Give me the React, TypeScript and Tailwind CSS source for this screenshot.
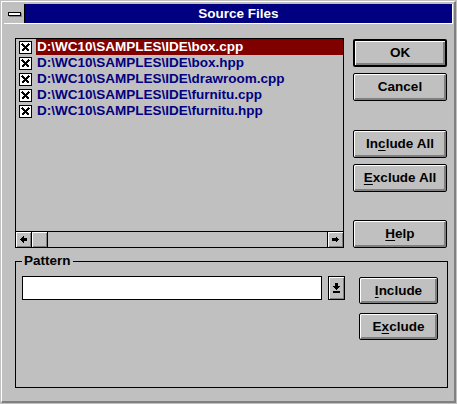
import React from 'react';

// Lista de ficheros del diálogo
const files = [
  'D:\\WC10\\SAMPLES\\IDE\\box.cpp',
  'D:\\WC10\\SAMPLES\\IDE\\box.hpp',
  'D:\\WC10\\SAMPLES\\IDE\\drawroom.cpp',
  'D:\\WC10\\SAMPLES\\IDE\\furnitu.cpp',
  'D:\\WC10\\SAMPLES\\IDE\\furnitu.hpp',
];

const bevel = 'shadow-[inset_1px_1px_0_#ffffff,inset_-2px_-2px_0_#808080]';

function Btn({ children, className = '', isDefault = false }: { children: React.ReactNode; className?: string; isDefault?: boolean }) {
  return (
    <button
      type="button"
      className={`flex items-center justify-center rounded-[2px] bg-[#c0c0c0] border-black text-black text-[13.5px] font-bold leading-none ${bevel} ${isDefault ? 'border-2' : 'border'} ${className}`}
    >
      {children}
    </button>
  );
}

function U({ children }: { children: React.ReactNode }) {
  return <span className="underline decoration-1 underline-offset-[2px]">{children}</span>;
}

function CheckBox() {
  return (
    <div className="w-[13px] h-[13px] shrink-0 border border-black bg-white flex items-center justify-center">
      <svg width="9" height="9" viewBox="0 0 9 9" shapeRendering="crispEdges">
        <path d="M1 1 L8 8 M8 1 L1 8" stroke="#000" strokeWidth="2" />
      </svg>
    </div>
  );
}

function ArrowBtn({ dir, className = '' }: { dir: 'left' | 'right'; className?: string }) {
  return (
    <div className={`w-[15px] h-full flex items-center justify-center bg-[#c0c0c0] shadow-[inset_1px_1px_0_#ffffff,inset_-1px_-1px_0_#808080] ${className}`}>
      <svg width="7" height="7" viewBox="0 0 7 7" shapeRendering="crispEdges">
        {dir === 'left' ? (
          <path d="M0 3.5 L3.5 0 L3.5 7 Z M3.5 2 H7 V5 H3.5 Z" fill="#000" />
        ) : (
          <path d="M7 3.5 L3.5 0 L3.5 7 Z M0 2 H3.5 V5 H0 Z" fill="#000" />
        )}
      </svg>
    </div>
  );
}

export default function App() {
  return (
    <div
      className="w-[457px] h-[404px] bg-[#c0c0c0] pl-px pt-px overflow-hidden"
      style={{ fontFamily: '"Liberation Sans", Arial, sans-serif' }}
    >
      <div className="w-[455px] h-[402px] border-l border-t border-white border-r-2 border-b-2 border-r-[#808080] border-b-[#808080] flex flex-col">
        {/* Barra de título */}
        <div className="ml-[2px] mt-[2px] w-[449px] h-[20px] flex border-b border-r border-white">
          <div className="w-[21px] h-full border-r border-black flex items-center justify-center bg-[#c0c0c0]">
            <div className="w-[13px] h-[4px] border border-black bg-white shadow-[1px_1px_0_#808080]" />
          </div>
          <div className="flex-1 bg-[#000080] flex items-center justify-center text-white font-bold text-[13.5px] leading-none">
            Source Files
          </div>
        </div>

        <div className="ml-[13px] mt-[14px] flex">
          {/* Lista de ficheros */}
          <div className="w-[329px] h-[210px] border border-black flex flex-col">
            <div className="flex-1">
              {files.map((f, i) => (
                <div key={f} className="h-[16px] flex items-center pl-[3px]">
                  <CheckBox />
                  <div
                    className={`ml-[4px] flex-1 h-full flex items-center pl-px font-bold text-[13.5px] leading-none whitespace-nowrap ${
                      i === 0 ? 'bg-[#800000] text-white' : 'text-[#000080]'
                    }`}
                  >
                    {f}
                  </div>
                </div>
              ))}
            </div>
            <div className="h-[16px] border-t border-black flex">
              <ArrowBtn dir="left" className="border-r border-black w-[16px]" />
              <div className="w-[16px] h-full border-r border-black bg-[#c0c0c0] shadow-[inset_1px_1px_0_#ffffff,inset_-1px_-1px_0_#808080]" />
              <div className="flex-1" />
              <ArrowBtn dir="right" className="border-l border-black w-[16px]" />
            </div>
          </div>

          {/* Botones */}
          <div className="ml-[9px] w-[94px] pt-px flex flex-col">
            <Btn isDefault className="h-[28px] w-full">OK</Btn>
            <Btn className="h-[28px] w-full mt-[6px]">Cancel</Btn>
            <Btn className="h-[28px] w-full mt-[29px]">
              <span>In<U>c</U>lude All</span>
            </Btn>
            <Btn className="h-[28px] w-full mt-[6px]">
              <span><U>E</U>xclude All</span>
            </Btn>
            <Btn className="h-[28px] w-full mt-[28px]">
              <span><U>H</U>elp</span>
            </Btn>
          </div>
        </div>

        {/* Grupo Pattern */}
        <div className="relative ml-[13px] mt-[13px] w-[433px] h-[127px] border border-black">
          <span className="absolute left-[6px] -top-[8px] px-[2px] bg-[#c0c0c0] text-black font-bold text-[13.5px] leading-none">
            Pattern
          </span>
          <div className="pl-[6px] pt-[14px] flex items-start">
            <div className="w-[300px] h-[24px] border border-black bg-white" />
            <div className="ml-[6px] w-[17px] h-[24px] border border-black bg-[#c0c0c0] flex items-center justify-center shadow-[inset_1px_1px_0_#ffffff,inset_-1px_-1px_0_#808080]">
              <svg width="7" height="10" viewBox="0 0 7 10" shapeRendering="crispEdges">
                <path d="M3.5 7 L0 3 L7 3 Z M2 0 H5 V3 H2 Z" fill="#000" />
                <rect x="0" y="8" width="7" height="2" fill="#000" />
              </svg>
            </div>
            <div className="ml-[14px] mt-px w-[79px] flex flex-col">
              <Btn className="h-[27px] w-full">
                <span><U>I</U>nclude</span>
              </Btn>
              <Btn className="h-[27px] w-full mt-[9px]">
                <span>E<U>x</U>clude</span>
              </Btn>
            </div>
          </div>
        </div>
      </div>
    </div>
  );
}
